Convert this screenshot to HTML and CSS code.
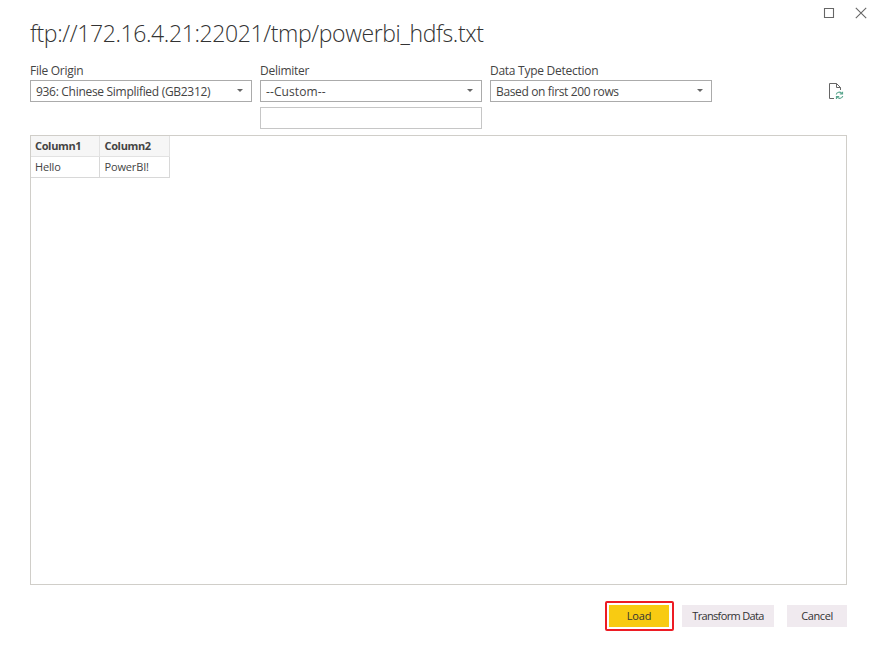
FILE: index.html
```html
<!DOCTYPE html>
<html lang="en">
<head>
<meta charset="utf-8">
<title>ftp://172.16.4.21:22021/tmp/powerbi_hdfs.txt</title>
<link rel="stylesheet" href="styles.css">
</head>
<body>
<main class="dialog">
  <div class="window-controls">
    <svg width="12" height="12" viewBox="0 0 12 12"><path d="M1.5 1.500h9v9h-9z"/></svg>
    <svg width="12" height="12" viewBox="0 0 12 12"><path d="M.8.8l10.4 10.4M11.2.8L.8 11.2"/></svg>
  </div>
  <h1>ftp://172.16.4.21:22021/tmp/powerbi_hdfs.txt</h1>
  <section class="options">
    <div class="field">
      <label>File Origin</label>
      <div class="select"><span>936: Chinese Simplified (GB2312)</span><i class="arrow"></i></div>
    </div>
    <div class="field">
      <label>Delimiter</label>
      <div class="select"><span class="custom">--Custom--</span><i class="arrow"></i></div>
      <div class="input"></div>
    </div>
    <div class="field">
      <label>Data Type Detection</label>
      <div class="select"><span class="based">Based on first 200 rows</span><i class="arrow"></i></div>
    </div>
    <svg class="refresh" width="16" height="18" viewBox="0 0 16 18">
      <path class="page" d="M6 16.500H1.500V1.500H8.500L12.500 5.500V8M8.500 1.500V5.500H12.500"/>
      <path class="sync" d="M8.300 12.500C8.700 9.900 12 9.500 13.700 11.400M14.500 9.700V12H11.800M14.700 14C14.200 16.600 11 17 9.300 15.100M8.500 17V14.500H11.200"/>
    </svg>
  </section>
  <section class="preview">
    <table>
      <tr><th>Column1</th><th>Column2</th></tr>
      <tr><td>Hello</td><td>PowerBI!</td></tr>
    </table>
  </section>
  <footer>
    <div class="highlight"><button class="load">Load</button></div>
    <button class="transform">Transform Data</button>
    <button class="cancel">Cancel</button>
  </footer>
</main>
</body>
</html>
```
FILE: styles.css
```css
* { box-sizing: border-box; }
body {
  margin: 0;
  background: #fff;
  color: #444;
  font: 12px/16px "Open Sans", "Noto Sans", sans-serif;
  letter-spacing: -0.3px;
}
.dialog { height: 657px; padding: 7px 30px 0; overflow: hidden; }
.window-controls {
  display: flex;
  justify-content: flex-end;
  gap: 20px;
  height: 12px;
  margin-right: -20px;
}
.window-controls path { fill: none; stroke: #666; stroke-width: 1.1; }
h1 {
  height: 44px;
  margin: 0;
  color: #333;
  font-size: 23px;
  font-weight: 300;
  line-height: 29px;
  letter-spacing: -0.38px;
  white-space: nowrap;
}
.options { display: flex; gap: 8px; height: 72px; }
.field { width: 222px; }
label { display: block; height: 17px; line-height: 16px; letter-spacing: -0.27px; }
.select {
  display: flex;
  align-items: center;
  justify-content: space-between;
  height: 22px;
  padding: 1px 8px 0 5px;
  border: 1px solid #ababab;
}
.custom { letter-spacing: 0.1px; }
.based { letter-spacing: -0.36px; }
.input { height: 22px; margin-top: 5px; border: 1px solid #c6c6c6; }
.arrow {
  margin-top: -2px;
  border: 3px solid transparent;
  border-top-color: #666;
  border-bottom: 0;
}
.refresh { margin: 19px 3px 0 auto; fill: none; }
.page { stroke: #666; }
.sync { stroke: #5aa68e; stroke-width: 1.2; }
.preview { height: 450px; border: 1px solid #d0cec9; }
table { width: 139px; border-collapse: separate; border-spacing: 0; table-layout: fixed; }
th, td {
  height: 21px;
  padding: 0 0 0 4px;
  border-right: 1px solid #d8d8d8;
  border-bottom: 1px solid #d8d8d8;
  font-size: 11px;
  line-height: 20px;
  text-align: left;
}
td { letter-spacing: -0.15px; }
th {
  background: #f6f6f6;
  border-color: #e2e2e2;
  font-weight: 700;
  letter-spacing: -0.6px;
  letter-spacing: -0.35px;
}
tr > :first-child { width: 69px; }
tr > :last-child { padding-left: 4.5px; }
footer {
  display: flex;
  justify-content: flex-end;
  align-items: center;
  margin-top: 16px;
}
.highlight { padding: 2px; border: 2px solid #ed1c24; border-radius: 2px; width: 69px; height: 30px; }
button {
  height: 22px;
  padding: 0;
  border: 0;
  background: #f0eaef;
  color: #333;
  font: 11px/22px "Open Sans", sans-serif;
  letter-spacing: -0.2px;
}
.load { display: block; width: 60px; background: #f8cb12; }
.transform { width: 92px; margin-left: 8px; letter-spacing: -0.65px; }
.cancel { width: 60px; margin-left: 13px; letter-spacing: -0.4px; }
```
